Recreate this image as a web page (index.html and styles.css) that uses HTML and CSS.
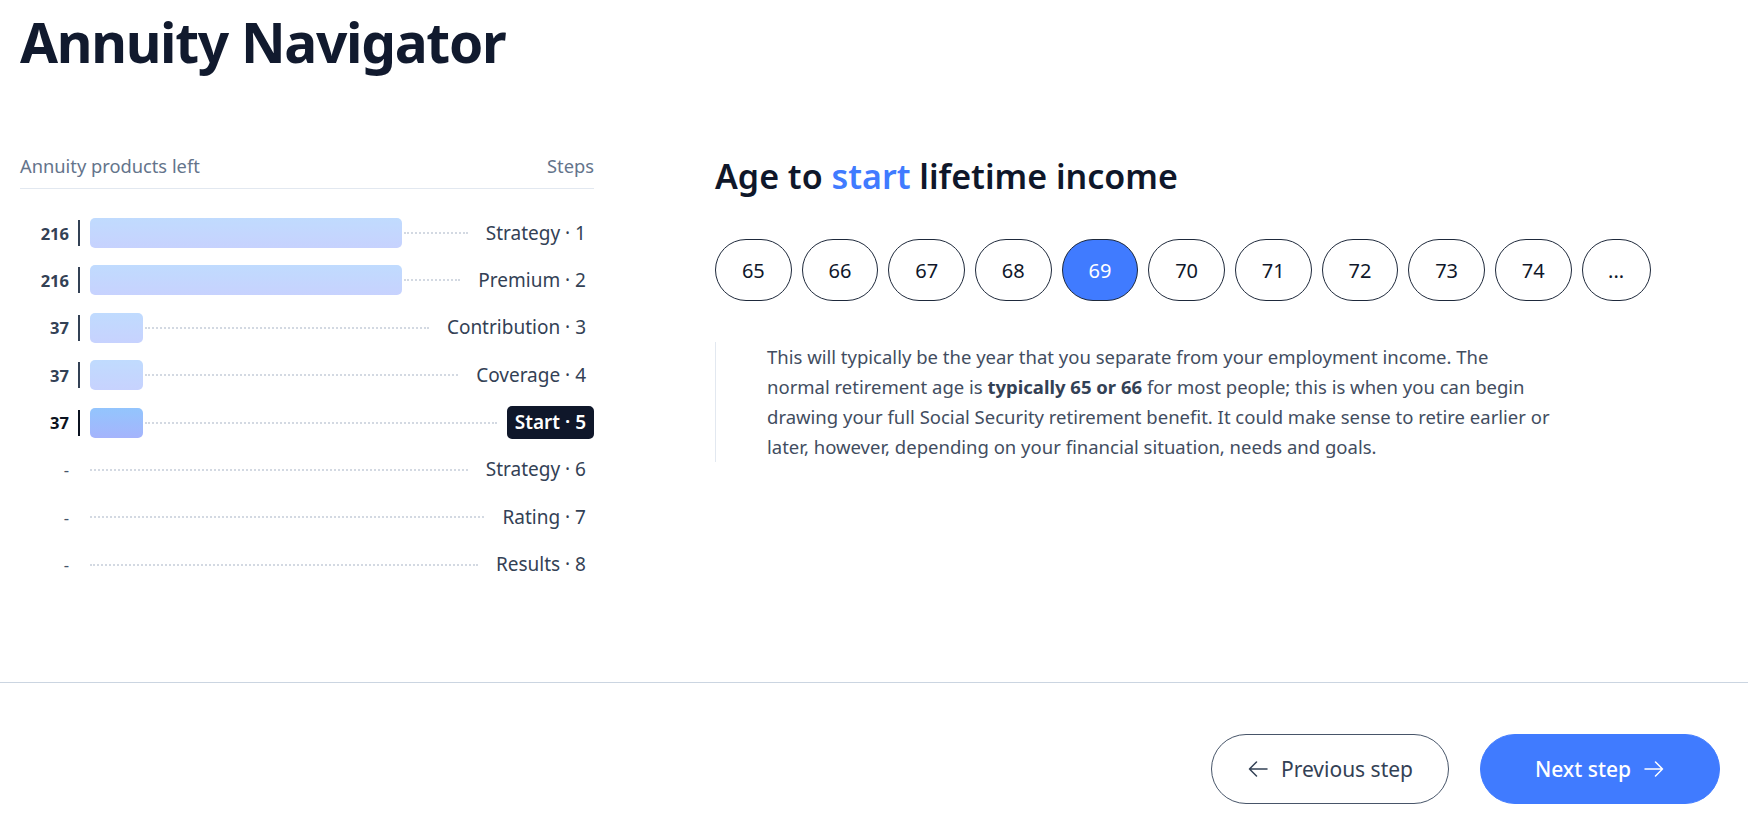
FILE: index.html
```html
<!DOCTYPE html>
<html lang="en">
<head>
<meta charset="utf-8">
<title>Annuity Navigator</title>
<link rel="stylesheet" href="styles.css">
</head>
<body>
<div class="page">
  <header class="top">
    <h1 class="title">Annuity Navigator</h1>
  </header>

  <main class="main">
    <aside class="progress">
      <div class="progress-head">
        <span>Annuity products left</span>
        <span>Steps</span>
      </div>
      <ol class="rows">
        <li class="row">
          <span class="num">216</span><span class="mark"></span>
          <span class="fill"><span class="bar" style="width:312px"></span><span class="dots"></span></span>
          <span class="label">Strategy · 1</span>
        </li>
        <li class="row">
          <span class="num">216</span><span class="mark"></span>
          <span class="fill"><span class="bar" style="width:312px"></span><span class="dots"></span></span>
          <span class="label">Premium · 2</span>
        </li>
        <li class="row">
          <span class="num">37</span><span class="mark"></span>
          <span class="fill"><span class="bar" style="width:53px"></span><span class="dots"></span></span>
          <span class="label">Contribution · 3</span>
        </li>
        <li class="row">
          <span class="num">37</span><span class="mark"></span>
          <span class="fill"><span class="bar" style="width:53px"></span><span class="dots"></span></span>
          <span class="label">Coverage · 4</span>
        </li>
        <li class="row row-current">
          <span class="num">37</span><span class="mark"></span>
          <span class="fill"><span class="bar" style="width:53px"></span><span class="dots"></span></span>
          <span class="label">Start · 5</span>
        </li>
        <li class="row row-pending">
          <span class="num">-</span><span class="mark"></span>
          <span class="fill"><span class="dots"></span></span>
          <span class="label">Strategy · 6</span>
        </li>
        <li class="row row-pending">
          <span class="num">-</span><span class="mark"></span>
          <span class="fill"><span class="dots"></span></span>
          <span class="label">Rating · 7</span>
        </li>
        <li class="row row-pending">
          <span class="num">-</span><span class="mark"></span>
          <span class="fill"><span class="dots"></span></span>
          <span class="label">Results · 8</span>
        </li>
      </ol>
    </aside>

    <section class="question">
      <h2 class="question-title">Age to <span class="accent">start</span> lifetime income</h2>
      <div class="ages">
        <button class="age" type="button">65</button>
        <button class="age" type="button">66</button>
        <button class="age" type="button">67</button>
        <button class="age" type="button">68</button>
        <button class="age age-selected" type="button">69</button>
        <button class="age" type="button">70</button>
        <button class="age" type="button">71</button>
        <button class="age" type="button">72</button>
        <button class="age" type="button">73</button>
        <button class="age" type="button">74</button>
        <button class="age age-more" type="button">...</button>
      </div>
      <p class="note">This will typically be the year that you separate from your employment income. The normal retirement age is <strong>typically 65 or 66</strong> for most people; this is when you can begin drawing your full Social Security retirement benefit. It could make sense to retire earlier or later, however, depending on your financial situation, needs and goals.</p>
    </section>
  </main>

  <footer class="footer">
    <button class="btn btn-prev" type="button">
      <svg class="arrow" width="22" height="18" viewBox="0 0 22 18" fill="none" stroke="currentColor" stroke-width="1.5" stroke-linecap="round" stroke-linejoin="round"><path d="M20 9H2.5M9.5 2L2.5 9l7 7"/></svg>
      <span>Previous step</span>
    </button>
    <button class="btn btn-next" type="button">
      <span>Next step</span>
      <svg class="arrow" width="22" height="18" viewBox="0 0 22 18" fill="none" stroke="currentColor" stroke-width="1.5" stroke-linecap="round" stroke-linejoin="round"><path d="M2 9h17.5M12.5 2l7 7-7 7"/></svg>
    </button>
  </footer>
</div>
</body>
</html>
```

FILE: styles.css
```css
* { box-sizing: border-box; }

html, body {
  margin: 0;
  padding: 0;
  background: #ffffff;
}

body {
  font-family: "Noto Sans", "Open Sans", "DejaVu Sans", sans-serif;
  color: #0f172a;
  overflow: hidden;
}

.top {
  padding: 0 20px;
}

.title {
  margin: 7px 0 0;
  font-size: 55px;
  line-height: 70px;
  font-weight: 700;
  color: #111a2e;
  letter-spacing: -1.3px;
}

.main {
  display: flex;
  align-items: flex-start;
  gap: 121px;
  margin-top: 77px;
  padding: 0 20px;
}

/* progress panel */
.progress {
  width: 574px;
  flex: none;
}

.progress-head {
  display: flex;
  justify-content: space-between;
  font-size: 18.3px;
  line-height: 24px;
  color: #64748b;
  padding-bottom: 10px;
  border-bottom: 1px solid #e2e8f0;
}

.rows {
  list-style: none;
  margin: 29px 0 0;
  padding: 0;
  display: flex;
  flex-direction: column;
  gap: 17.4px;
}

.row {
  display: flex;
  align-items: center;
  height: 30px;
}

.num {
  width: 49px;
  flex: none;
  text-align: right;
  font-size: 16.5px;
  font-weight: 700;
  color: #334155;
}

.mark {
  width: 2px;
  height: 26px;
  margin-left: 9px;
  margin-right: 10px;
  background: #334155;
  flex: none;
}

.fill {
  flex: 1;
  display: flex;
  align-items: center;
  min-width: 0;
}

.bar {
  height: 30px;
  flex: none;
  border-radius: 5px;
  background: linear-gradient(180deg, #c0dbfe 0%, #c7d2fe 100%);
}

.dots {
  flex: 1;
  height: 0;
  margin-left: 2px;
  margin-right: 10px;
  border-top: 2px dotted #d3d9e2;
}

.label {
  flex: none;
  padding: 3px 8px;
  font-size: 19px;
  line-height: 27px;
  color: #334155;
  border-radius: 5px;
}

.row-current .num { color: #0b1220; }
.row-current .mark { background: #0b1220; }
.row-current .bar {
  background: linear-gradient(180deg, #93c5fd 0%, #a5b4fc 100%);
}
.row-current .label {
  background: #0f172a;
  color: #ffffff;
  font-weight: 600;
}

.row-pending .num {
  font-weight: 400;
  color: #475569;
}
.row-pending .mark { background: transparent; }
.row-pending .dots { margin-left: 0; }

/* question */
.question {
  flex: 1;
  min-width: 0;
}

.question-title {
  margin: 2px 0 0;
  font-size: 34px;
  line-height: 40px;
  font-weight: 600;
  color: #0f172a;
}

.accent { color: #407bff; }

.ages {
  display: flex;
  gap: 10px;
  margin-top: 43px;
}

.age {
  height: 62px;
  min-width: 76.67px;
  padding: 0 24px;
  border: 1px solid #1e293b;
  border-radius: 31px;
  background: #ffffff;
  font-family: inherit;
  font-size: 20px;
  color: #0f172a;
  cursor: pointer;
}

.age-more { min-width: 69px; }

.age-selected {
  background: #407bff;
  color: #ffffff;
}

.note {
  margin: 41px 0 0;
  width: 835px;
  padding-left: 51px;
  border-left: 1px solid #e2e8f0;
  font-size: 18.5px;
  line-height: 30px;
  color: #424d5f;
}

.note strong {
  font-weight: 700;
  color: #334155;
}

/* footer */
.footer {
  margin-top: 102px;
  border-top: 1px solid #cbd5e1;
  padding: 51px 28px 54px 20px;
  display: flex;
  justify-content: flex-end;
  gap: 31px;
}

.btn {
  height: 70px;
  border-radius: 35px;
  display: flex;
  align-items: center;
  justify-content: center;
  gap: 12px;
  font-family: inherit;
  font-size: 21px;
  cursor: pointer;
}

.btn-prev {
  width: 238px;
  background: #ffffff;
  border: 1px solid #475569;
  color: #334155;
}

.btn-next {
  width: 240px;
  background: #407bff;
  border: 1px solid #407bff;
  color: #ffffff;
  font-weight: 500;
}

.arrow { flex: none; display: block; }
```
